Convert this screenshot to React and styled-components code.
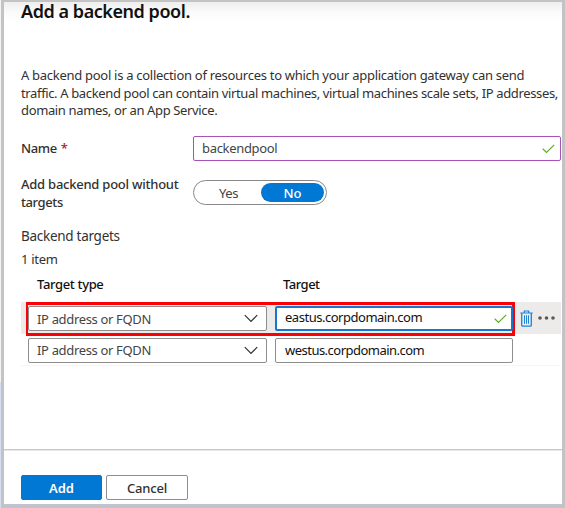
import React from "react";
import styled, { createGlobalStyle } from "styled-components";

const GlobalStyle = createGlobalStyle`
  * { box-sizing: border-box; }
  body {
    margin: 0;
    background: #fff;
    color: #323130;
    font-family: "Noto Sans", "Open Sans", sans-serif;
    font-size: 13px;
    overflow: hidden;
  }
`;

const Page = styled.div`
  width: 565px;
  height: 508px;
  padding-left: 1px;
  background: linear-gradient(#f4f4f4 0, #f4f4f4 382px, #d3dff0 382px);
`;

const Panel = styled.main`
  height: 508px;
  display: flex;
  flex-direction: column;
  border: 3px solid #c3c3c3;
  border-top-width: 2px;
  background: linear-gradient(#eeeeee 0, #fafafa 10px, #fff 20px);
`;

const Content = styled.div`
  flex: 1;
  padding: 0 1px 0 17px;
`;

const Text = styled.span`
  white-space: nowrap;
  letter-spacing: ${(p) => p.$spacing || 0}px;
  padding-bottom: ${(p) => p.$lift || 0}px;
`;

const Title = styled.h1`
  margin: -5px 0 0;
  height: 28px;
  line-height: 28px;
  font-size: 18px;
  font-weight: 600;
  color: #111;
`;

const Description = styled.p`
  display: flex;
  flex-direction: column;
  margin: 42.4px 0 0;
  line-height: 17.4px;
`;

const Field = styled.div`
  display: grid;
  grid-template-columns: 172px 1fr;
  height: ${(p) => p.$height}px;
  margin-top: ${(p) => p.$top}px;
`;

const Label = styled.label`
  display: flex;
  flex-direction: column;
  margin-top: ${(p) => p.$top || 0}px;
  line-height: 17.5px;
  font-weight: 500;
`;

const Required = styled.span`
  margin-left: 1px;
  color: #a4262c;
`;

const Box = styled.div`
  display: flex;
  align-items: center;
  justify-content: space-between;
  height: 25px;
  padding: 0 ${(p) => p.$right || 5}px 0 ${(p) => p.$left || 8}px;
  border: ${(p) => p.$border || "1px solid #8f8e8d"};
  border-radius: 2px;
  background: #fff;
  color: ${(p) => p.$color || "#444"};
`;

const Toggle = styled.div`
  display: flex;
  align-items: center;
  width: 134px;
  height: 25px;
  padding: 2px;
  border: 1px solid #8a8886;
  border-radius: 13px;
`;

const Option = styled.span`
  display: flex;
  align-items: center;
  justify-content: center;
  width: ${(p) => (p.$selected ? 63 : 65)}px;
  height: 19px;
  border-radius: 10px;
  background: ${(p) => (p.$selected ? "#0078d4" : "transparent")};
  color: ${(p) => (p.$selected ? "#fff" : "#444")};
  font-weight: ${(p) => (p.$selected ? 500 : 400)};
`;

const SectionTitle = styled.div`
  margin-top: 13.6px;
  line-height: 20px;
  font-size: 13.5px;
`;

const Count = styled.div`
  margin-top: 4px;
  line-height: 18px;
`;

const HeaderRow = styled.div`
  display: grid;
  grid-template-columns: 246px 1fr;
  margin-top: 6.4px;
  height: 28.4px;
  padding-left: 16px;
  line-height: 20px;
  font-weight: 500;
  color: #111;
`;

const TargetRow = styled.div`
  display: flex;
  align-items: center;
  height: 32px;
  background: ${(p) => (p.$active ? "#edebe9" : "#fff")};
  border-bottom: ${(p) => (p.$active ? "none" : "1px solid #f5f5f5")};
  padding-left: ${(p) => (p.$active ? 5 : 7)}px;
  padding-top: ${(p) => (p.$active ? 0 : 1)}px;
`;

const Highlight = styled.div`
  position: relative;
  top: 1px;
  flex: none;
  width: 489px;
  height: 34px;
  padding: 1px 0 0;
  border: solid #fb0007;
  border-width: 3px 3px 3px 2px;
`;

const Inputs = styled.div`
  display: grid;
  grid-template-columns: 239px 238px;
  column-gap: 8px;
`;

const Actions = styled.div`
  display: flex;
  align-items: center;
  gap: 5px;
  margin-left: 5px;
`;

const Footer = styled.footer`
  display: flex;
  gap: 4px;
  height: 56px;
  padding: 25px 0 0 17px;
  border-top: 1px solid #c8c8c8;
  box-shadow: inset 0 1px #e8e8e8;
  border-bottom: 1px solid #bdc5d5;
`;

const Button = styled.button`
  width: ${(p) => (p.$primary ? 81 : 82)}px;
  height: 25px;
  padding: 0;
  border: 1px solid ${(p) => (p.$primary ? "#0078d4" : "#8f8e8d")};
  border-radius: 2px;
  background: ${(p) => (p.$primary ? "#0078d4" : "#fff")};
  color: ${(p) => (p.$primary ? "#fff" : "#323130")};
  font: ${(p) => (p.$primary ? 600 : 500)} 13px "Noto Sans", sans-serif;
`;

const Check = () => (
  <svg width="13" height="10" viewBox="0 0 13 10" fill="none">
    <path d="M.7 4.8 4.5 8.5 12.2.8" stroke="#62ad28" strokeWidth="1.2" />
  </svg>
);

const Chevron = () => (
  <svg width="14" height="9" viewBox="0 0 14 9" fill="none">
    <path d="m.8 1.2 6.2 6.3 6.2-6.3" stroke="#323130" strokeWidth="1.2" />
  </svg>
);

const Trash = () => (
  <svg width="13" height="17" viewBox="0 0 13 17" fill="none" stroke="#1c83d9">
    <path d="M.3 3h12.4M4.3 2.7V1h4.4v1.7" strokeWidth="1.2" />
    <path d="M1.7 3v12.2q0 1 1 1h7.6q1 0 1-1V3" strokeWidth="1.3" />
    <path d="M4.5 5.3v8.5M6.5 5.3v8.5M8.5 5.3v8.5" strokeWidth="1" />
  </svg>
);

const More = () => (
  <svg width="17" height="4" viewBox="0 0 17 4" fill="#5a5958">
    <circle cx="2" cy="2" r="1.8" />
    <circle cx="8.5" cy="2" r="1.8" />
    <circle cx="15" cy="2" r="1.8" />
  </svg>
);

const TargetInputs = ({ value, active, spacing }) => (
  <Inputs>
    <Box $right={8}>
      <Text $spacing={-0.34}>IP address or FQDN</Text>
      <Chevron />
    </Box>
    <Box
      $border={active ? "2px solid #1677cf" : undefined}
      $left={active ? 8 : 9}
      $right={active ? 4 : 5}
      $color="#111"
    >
      <Text $spacing={spacing} $lift={active ? 4 : 0}>{value}</Text>
      {active && <Check />}
    </Box>
  </Inputs>
);

export default function App() {
  return (
    <>
      <GlobalStyle />
      <Page>
        <Panel>
          <Content>
            <Title><Text $spacing={-0.45}>Add a backend pool.</Text></Title>
            <Description>
              <Text $spacing={-0.285}>A backend pool is a collection of resources to which your application gateway can send</Text>
              <Text $spacing={-0.36}>traffic. A backend pool can contain virtual machines, virtual machines scale sets, IP addresses,</Text>
              <Text $spacing={-0.36}>domain names, or an App Service.</Text>
            </Description>
            <Field $top={16.4} $height={25}>
              <Label $top={4}>
                <Text $spacing={-0.4}>Name <Required>*</Required></Text>
              </Label>
              <Box $border="1px solid #a652b8">
                <Text $spacing={-0.32} $lift={2}>backendpool</Text>
                <Check />
              </Box>
            </Field>
            <Field $top={19} $height={32}>
              <Label $top={-4}>
                <Text $spacing={-0.24}>Add backend pool without</Text>
                <Text $spacing={-0.4}>targets</Text>
              </Label>
              <Toggle>
                <Option><Text $spacing={-0.5}>Yes</Text></Option>
                <Option $selected><Text>No</Text></Option>
              </Toggle>
            </Field>
            <SectionTitle><Text $spacing={-0.28}>Backend targets</Text></SectionTitle>
            <Count><Text $spacing={-0.3}>1 item</Text></Count>
            <HeaderRow>
              <Text $spacing={-0.35}>Target type</Text>
              <Text $spacing={-0.5}>Target</Text>
            </HeaderRow>
            <TargetRow $active>
              <Highlight>
                <TargetInputs value="eastus.corpdomain.com" spacing={-0.48} active />
              </Highlight>
              <Actions>
                <Trash />
                <More />
              </Actions>
            </TargetRow>
            <TargetRow>
              <TargetInputs value="westus.corpdomain.com" spacing={-0.52} />
            </TargetRow>
          </Content>
          <Footer>
            <Button $primary><Text>Add</Text></Button>
            <Button><Text $spacing={-0.2}>Cancel</Text></Button>
          </Footer>
        </Panel>
      </Page>
    </>
  );
}
